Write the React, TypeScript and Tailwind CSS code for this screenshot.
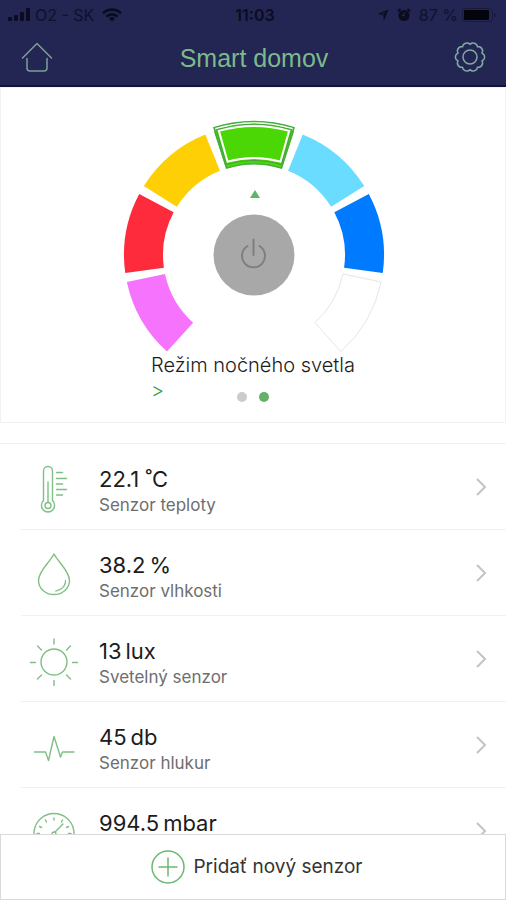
import { useState } from 'react';
import type { ReactNode } from 'react';

const segments = [
  { name: 'Ružová', angle: -120, fill: '#f673fd' },
  { name: 'Červená', angle: -80, fill: '#fe2b3d' },
  { name: 'Žltá', angle: -40, fill: '#ffcf05' },
  { name: 'Zelená', angle: 0, fill: '#4bd605' },
  { name: 'Bledomodrá', angle: 40, fill: '#6adcff' },
  { name: 'Modrá', angle: 80, fill: '#007aff' },
  { name: 'Biela', angle: 120, fill: '#ffffff' },
];

function polar(deg: number, r: number) {
  const a = (deg * Math.PI) / 180;
  return `${(r * Math.sin(a)).toFixed(2)} ${(-r * Math.cos(a)).toFixed(2)}`;
}

// Ring segment around 0,0, angles in degrees clockwise from the top
function arcPath(mid: number, half: number, inner: number, outer: number) {
  const from = mid - half;
  const to = mid + half;
  return `M${polar(from, outer)}A${outer} ${outer} 0 0 1 ${polar(to, outer)}L${polar(to, inner)}A${inner} ${inner} 0 0 0 ${polar(from, inner)}Z`;
}

// Gear with ten rounded teeth
const gearPath =
  Array.from({ length: 10 }, (_, i) => {
    const a = i * 36;
    return `${i === 0 ? 'M' : 'L'}${polar(a, 12.6)}L${polar(a + 7, 14)}Q${polar(a + 18, 15.4)} ${polar(a + 29, 14)}`;
  }).join('') + 'Z';

function Icon({ children }: { children: ReactNode }) {
  return (
    <svg viewBox="0 0 50 50" className="mt-1 size-[50px] shrink-0" fill="none" stroke="#7fbf84" strokeWidth="1.4" strokeLinecap="round" strokeLinejoin="round">
      {children}
    </svg>
  );
}

const sensors = [
  {
    value: '22.1 ˚C',
    label: 'Senzor teploty',
    icon: (
      <Icon>
        <path d="M14.500 36.500V7a4.500 4.500 0 0 1 9 0v29.500a6.600 6.600 0 1 1-9 0z" />
        <path d="M19 18v20.500" />
        <circle cx="19" cy="41.500" r="3" />
        <path d="M27.500 8.500h6M27.500 14.500h10M27.500 20h6M27.500 25.500h10M27.500 31h6" />
      </Icon>
    ),
  },
  {
    value: '38.2\u2009%',
    label: 'Senzor vlhkosti',
    icon: (
      <Icon>
        <path d="M25 4C21 12 9.500 21 9.500 30.500a15.500 14 0 0 0 31 0C40.500 21 29 12 25 4z" />
        <path d="M36.500 30.500c0 5-4 9-10 10.500 4-.5 11-3 10-10.500z" strokeWidth="1" />
      </Icon>
    ),
  },
  {
    value: '13\u2009lux',
    label: 'Svetelný senzor',
    icon: (
      <Icon>
        <circle cx="25" cy="26" r="13" />
        <path d="M25 3v5M25 44.500v5M1.500 26.500h5M43.500 26.500h5M8.500 10l4 4M37.500 39l4 4M8.500 43l4-4M37.500 14l4-4" />
      </Icon>
    ),
  },
  {
    value: '45\u2009db',
    label: 'Senzor hlukur',
    icon: (
      <Icon>
        <path d="M5.500 30h11l3 8.500 5.500-24 6.500 20.500 2-5h11.500" />
      </Icon>
    ),
  },
  {
    value: '994.5\u2009mbar',
    icon: (
      <Icon>
        <path d="M8 36a20 20 0 1 1 34 0z" />
        <path d="M25 10v2M16.500 12l1 2M33.500 12l-1 2M10.500 18.500l2 1M39.500 18.500l-2 1M8 25.500h2.500M39.500 25.500h2.500M26 24l8-8" />
        <circle cx="25" cy="26" r="2" />
      </Icon>
    ),
  },
];

function StatusBar() {
  return (
    <div className="flex h-[30px] items-center px-2 text-base text-[#0b0c20]">
      <div className="flex flex-1 items-center gap-1">
        <svg viewBox="0 0 23 14" className="h-3.5 w-[23px]" fill="currentColor">
          <rect x="0" y="9" width="4" height="4" rx="1" />
          <rect x="6" y="7" width="4" height="6" rx="1" />
          <rect x="12" y="4" width="4" height="9" rx="1" />
          <rect x="18" y="0" width="4" height="13" rx="1" />
        </svg>
        <span className="text-[#10112b]">O2 - SK</span>
        <svg viewBox="0 0 20 14" className="ml-1 h-3.5 w-5" fill="none" stroke="currentColor" strokeWidth="2.600">
          <path d="M1 5.200a13 13 0 0 1 18 0" />
          <path d="M4.500 8.600a8 8 0 0 1 11 0" />
          <path d="M10 13.500l-3-3a4.300 4.300 0 0 1 6 0z" fill="currentColor" stroke="none" />
        </svg>
      </div>
      <span className="pl-1 font-semibold">11:03</span>
      <div className="flex flex-1 items-center justify-end gap-2">
        <svg viewBox="0 0 12 12" className="size-3" fill="currentColor">
          <path fillRule="evenodd" d="M11.500.5 7 11.500 6.200 6 .5 5zM8.500 3 4.500 4.800 7 5.200z" />
        </svg>
        <svg viewBox="0 0 14 14" className="size-3.5">
          <circle cx="7" cy="7.500" r="5.500" fill="currentColor" />
          <path d="M.8 3.500 3.500 1M13.200 3.500 10.500 1" stroke="currentColor" strokeWidth="1.800" />
          <path d="M7 4.500v3.200H4.500" fill="none" stroke="#232553" strokeWidth="1.200" />
        </svg>
        <span className="text-[#10112b]">87 %</span>
        <svg viewBox="0 0 36 14" className="-ml-1 h-3.5 w-9">
          <rect x=".5" y=".5" width="30" height="13" rx="3" fill="none" stroke="#191a3c" />
          <rect x="2" y="2" width="25" height="10" rx="1" fill="#04040c" />
          <path d="M32.500 5v4a2.500 2.500 0 0 0 0-4z" fill="#10112b" />
        </svg>
      </div>
    </div>
  );
}

export default function App() {
  const [selected, setSelected] = useState(3);
  const [isOn, setIsOn] = useState(false);
  const active = segments[selected];

  return (
    <div className="flex h-screen flex-col overflow-hidden bg-white font-['Inter','Liberation_Sans',sans-serif] text-[#1c1c1c]">
      <header className="shrink-0 border-b-2 border-[#12133a] bg-[#232553]">
        <StatusBar />
        <div className="flex h-[55px] items-center justify-between px-5">
          <button aria-label="Domov">
            <svg viewBox="0 0 34 32" className="h-8 w-[34px]" fill="none" stroke="#7d9f9c" strokeWidth="1.500" strokeLinecap="round" strokeLinejoin="round">
              <path d="M2.500 16 17 1.500 31.500 16" />
              <path d="M7 16.500v9.500a3 3 0 0 0 3 3h14a3 3 0 0 0 3-3v-9.500" />
            </svg>
          </button>
          <h1 className="font-['Liberation_Sans',Arial,sans-serif] text-[25px] leading-8 text-[#7dba8a]">Smart domov</h1>
          <button aria-label="Nastavenia">
            <svg viewBox="-16 -15 32 32" className="size-8" fill="none" stroke="#84a8a4" strokeWidth="1.500" strokeLinejoin="round">
              <circle r="7" />
              <path d={gearPath} />
            </svg>
          </button>
        </div>
      </header>

      <section className="flex shrink-0 flex-col items-center border border-[#f2f2f2] pt-8 pb-4">
        <svg viewBox="-135 -135 268 232" className="h-[232px] w-[268px]">
          {segments.map((s, i) => (
            <path
              key={s.name}
              d={arcPath(s.angle, 18, 91, 130)}
              fill={s.fill}
              stroke={s.fill === '#ffffff' ? '#e6e6e6' : 'none'}
              className="cursor-pointer"
              onClick={() => setSelected(i)}
            />
          ))}
          <g transform={`rotate(${active.angle})`} className="pointer-events-none">
            <path d={arcPath(0, 17.5, 91, 133.5)} fill={active.fill} stroke="#45a84a" strokeWidth="1.300" />
            <path d={arcPath(0, 17, 129, 132.7)} fill="#ffffff" />
            <path d={arcPath(0, 16.8, 94.5, 131)} fill={active.fill} stroke="#4a9d4c" strokeWidth="1" />
            <path d={arcPath(0, 15.8, 97, 129)} fill="none" stroke="#ffffff" strokeWidth="2" />
          </g>
          <path d="M1-65l5 8h-10z" fill="#5fb564" />
          <g role="button" aria-label="Zapnúť" className="cursor-pointer" onClick={() => setIsOn(!isOn)}>
            <circle r="40.500" fill={isOn ? '#7dba8a' : '#a8a8a8'} />
            <path d="M-6.500-9a11.500 11.500 0 1 0 12 0M-.5-15.500V0" fill="none" stroke="#7e7e7e" strokeWidth="2" strokeLinecap="round" />
          </g>
        </svg>
        <div className="w-fit">
          <p className="text-xl leading-[26px] font-light">Režim nočného svetla</p>
          <div className="grid grid-cols-3">
            <a href="#rezim" aria-label="Režim nočného svetla" className="text-xl leading-6 font-light text-[#3f9f45]">&gt;</a>
            <div className="flex items-end justify-center gap-3">
              <span className="size-2.5 rounded-full bg-[#cbcbcb]" />
              <span className="size-2.5 rounded-full bg-[#66b168]" />
            </div>
          </div>
        </div>
        <div className="h-1" />
      </section>

      <ul className="mt-5 min-h-0 flex-1 overflow-y-auto border-t border-[#f0f0f0] [scrollbar-width:none]">
        {sensors.map((s) => (
          <li key={s.value} className="ml-[21px] h-[86px] border-b border-[#f0f0f0]">
            <a href="#senzor" className="flex h-full items-center pr-5 pl-2">
              {s.icon}
              <div className="ml-5 flex-1 pt-2">
                <p className="text-[22px] leading-7">{s.value}</p>
                <p className="h-6 text-[17px] leading-6 text-[#6e6e6e]">{s.label}</p>
              </div>
              <svg viewBox="0 0 10 18" className="h-[18px] w-2.5" fill="none" stroke="#c4c4c4" strokeWidth="2">
                <path d="M1 1l8 8-8 8" />
              </svg>
            </a>
          </li>
        ))}
      </ul>

      <button className="flex h-[66px] shrink-0 items-center justify-center gap-2 border border-[#d9d9d9] bg-white pl-2 text-[19px] text-[#333333]">
        <svg viewBox="0 0 34 34" className="size-[34px]" fill="none" stroke="#6bb870" strokeWidth="1.500">
          <circle cx="17" cy="17" r="16" />
          <path d="M7.500 17h19M17 7.500v19" />
        </svg>
        Pridať nový senzor
      </button>
    </div>
  );
}
